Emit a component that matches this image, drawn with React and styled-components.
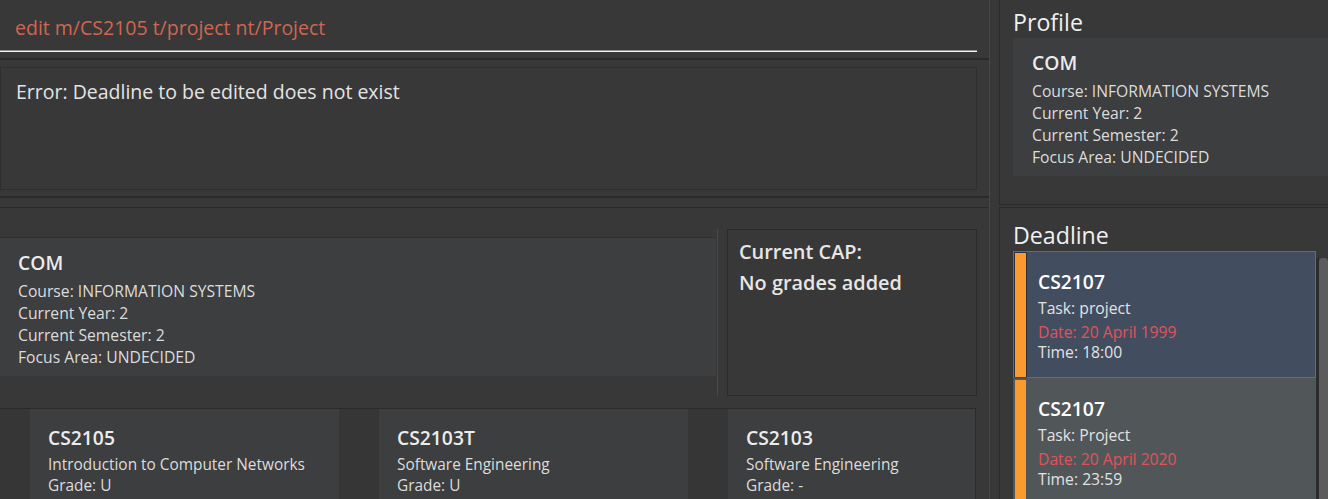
import React from "react";
import styled, { createGlobalStyle } from "styled-components";

const line = "#2b2b2b";

const GlobalStyle = createGlobalStyle`
  html, body {
    margin: 0;
    padding: 0;
    background: #383838;
  }
  body {
    font-family: "Open Sans", "Noto Sans", sans-serif;
    overflow: hidden;
  }
`;

const Window = styled.div`
  display: flex;
  width: 1328px;
  height: 499px;
  overflow: hidden;
  background: #383838;
`;

const LeftColumn = styled.div`
  width: 989px;
  flex-shrink: 0;
  display: flex;
  flex-direction: column;
`;

const ColumnSplit = styled.div`
  width: 1px;
  flex-shrink: 0;
  background: #474747;
`;

const CommandPane = styled.div`
  height: 58px;
  padding-right: 12px;
  box-sizing: border-box;
  flex-shrink: 0;
`;

const CommandField = styled.div`
  box-sizing: border-box;
  height: 52px;
  padding: 14px 0 0 15px;
  font-size: 19.5px;
  color: #d06651;
  white-space: nowrap;
  border-bottom: 1px solid #f4f4f4;
  box-shadow: inset 0 -1px 0 #8e8e8e;
`;

const PaneDivider = styled.div`
  height: 2px;
  flex-shrink: 0;
  background: ${line};
`;

const ResultPane = styled.div`
  height: 136px;
  flex-shrink: 0;
  box-sizing: border-box;
  padding: 7px 12px 6px 0;
`;

const ResultBox = styled.div`
  height: 100%;
  box-sizing: border-box;
  border: 1px solid #2e2e2e;
  padding: 10px 15px;
  font-size: 19.5px;
  color: #e4e4e4;
`;

const LowerPane = styled.div`
  flex: 1;
  display: flex;
  flex-direction: column;
  padding-top: 9px;
  min-height: 0;
`;

const InfoRow = styled.div`
  display: flex;
  height: 201px;
  flex-shrink: 0;
  box-sizing: border-box;
  border-top: 1px solid ${line};
  padding-right: 12px;
`;

const ProfileSlot = styled.div`
  width: 716px;
  flex-shrink: 0;
  padding-top: 29px;
`;

const ProfileCard = styled.div`
  background: #3c3e3f;
  border-top: ${(p) => (p.$edge ? "1px solid #303030" : "none")};
  padding: 12px 18px 8px;
  white-space: nowrap;
`;

const BigLabel = styled.div`
  font-size: 19.3px;
  font-weight: 600;
  line-height: 26px;
  color: ${(p) => p.$color || "#ececec"};
  margin-bottom: ${(p) => p.$gap || 0}px;
`;

const SmallLabel = styled.div`
  font-size: ${(p) => p.$size || 15.7}px;
  line-height: ${(p) => p.$lh || 22}px;
  color: ${(p) => p.$color || "#dcdcdc"};
  margin-top: ${(p) => p.$gap || 0}px;
`;

const VDivider = styled.div`
  width: 1px;
  flex-shrink: 0;
  margin: 21px 0 12px 1px;
  background: #4a4a4a;
`;

const CapBox = styled.div`
  flex: 1;
  margin: 21px 0 12px 9px;
  border: 1px solid ${line};
  padding: 6px 11px;
  font-size: 19.9px;
  font-weight: 600;
  line-height: 31px;
  color: #e6e6e6;
`;

const ModuleRow = styled.div`
  flex: 1;
  width: 976px;
  box-sizing: border-box;
  display: flex;
  gap: 40px;
  padding-left: 30px;
  border-top: 1px solid ${line};
  border-right: 1px solid ${line};
  overflow: hidden;
  background: #363636;
`;

const ModuleCard = styled.div`
  width: 309px;
  flex-shrink: 0;
  box-sizing: border-box;
  background: #3c3e3f;
  padding: 15.5px 18px 0;
  white-space: nowrap;
`;

const RightColumn = styled.div`
  flex: 1;
  min-width: 0;
  display: flex;
  flex-direction: column;
  padding-left: 9px;
  overflow: hidden;
`;

const ProfilePanel = styled.div`
  height: 205px;
  flex-shrink: 0;
  box-sizing: border-box;
  border-left: 1px solid ${line};
  border-bottom: 1px solid ${line};
  padding: 6px 0 0 13px;
  overflow: hidden;
`;

const PanelTitle = styled.div`
  font-size: 23.2px;
  line-height: 32px;
  color: #f0f0f0;
`;

const WideCard = styled(ProfileCard)`
  width: 400px;
  padding-left: 19px;
`;

const DeadlinePanel = styled.div`
  flex: 1;
  min-height: 0;
  margin-top: 2px;
  border-left: 1px solid ${line};
  border-top: 1px solid ${line};
  padding: 11px 0 0 13px;
  display: flex;
  flex-direction: column;
  overflow: hidden;
`;

const DeadlineList = styled.div`
  flex: 1;
  display: flex;
  min-height: 0;
`;

const DeadlineCards = styled.div`
  width: 303px;
  flex-shrink: 0;
  display: flex;
  flex-direction: column;
`;

const DeadlineCard = styled.div`
  display: flex;
  height: 127px;
  flex-shrink: 0;
  box-sizing: border-box;
  border: 1px solid ${(p) => (p.$selected ? "#3e7b91" : "transparent")};
  background: ${(p) => (p.$selected ? "#424d5f" : "#515658")};
`;

const Flag = styled.div`
  width: 11px;
  flex-shrink: 0;
  margin: 1px 0 0 1px;
  background: #fb9a2f;
  box-shadow: ${(p) => (p.$selected ? "0 0 0 1px rgba(0,0,0,0.35)" : "none")};
`;

const DeadlineBody = styled.div`
  padding: 16.5px 0 0 12px;
  white-space: nowrap;
`;

const ScrollTrack = styled.div`
  width: 12px;
  flex-shrink: 0;
  box-sizing: border-box;
  margin-top: 7px;
  border-left: 3px solid #2c2c2c;
  display: flex;
`;

const ScrollThumb = styled.div`
  flex: 1;
  background: #5c5c5c;
  border-radius: 4px 4px 0 0;
`;

const profile = [
  "Course: INFORMATION SYSTEMS",
  "Current Year: 2",
  "Current Semester: 2",
  "Focus Area: UNDECIDED",
];

const modules = [
  { code: "CS2105", title: "Introduction to Computer Networks", grade: "U" },
  { code: "CS2103T", title: "Software Engineering", grade: "U" },
  { code: "CS2103", title: "Software Engineering", grade: "-" },
];

const deadlines = [
  { code: "CS2107", task: "project", date: "20 April 1999", time: "18:00", selected: true },
  { code: "CS2107", task: "Project", date: "20 April 2020", time: "23:59" },
];

function Profile({ Card, edge }) {
  return (
    <Card $edge={edge}>
      <BigLabel $gap={4}>COM</BigLabel>
      {profile.map((text) => (
        <SmallLabel key={text}>{text}</SmallLabel>
      ))}
    </Card>
  );
}

function App() {
  return (
    <Window>
      <GlobalStyle />
      <LeftColumn>
        <CommandPane>
          <CommandField>edit m/CS2105 t/project nt/Project</CommandField>
        </CommandPane>
        <PaneDivider />
        <ResultPane>
          <ResultBox>Error: Deadline to be edited does not exist</ResultBox>
        </ResultPane>
        <PaneDivider />
        <LowerPane>
          <InfoRow>
            <ProfileSlot>
              <Profile Card={ProfileCard} edge />
            </ProfileSlot>
            <VDivider />
            <CapBox>
              <div>Current CAP:</div>
              <div>No grades added</div>
            </CapBox>
          </InfoRow>
          <ModuleRow>
            {modules.map((m) => (
              <ModuleCard key={m.code}>
                <BigLabel>{m.code}</BigLabel>
                <SmallLabel $size={15.4} $lh={21} $gap={3.5}>{m.title}</SmallLabel>
                <SmallLabel $size={15.4} $lh={21}>Grade: {m.grade}</SmallLabel>
              </ModuleCard>
            ))}
          </ModuleRow>
        </LowerPane>
      </LeftColumn>
      <ColumnSplit />
      <RightColumn>
        <ProfilePanel>
          <PanelTitle>Profile</PanelTitle>
          <Profile Card={WideCard} />
        </ProfilePanel>
        <DeadlinePanel>
          <PanelTitle>Deadline</PanelTitle>
          <DeadlineList>
            <DeadlineCards>
              {deadlines.map((d, i) => (
                <DeadlineCard key={i} $selected={d.selected}>
                  <Flag $selected={d.selected} />
                  <DeadlineBody>
                    <BigLabel $color="#ffffff" $gap={1}>{d.code}</BigLabel>
                    <SmallLabel $lh={25} $color="#e2e2e2">Task: {d.task}</SmallLabel>
                    <SmallLabel $color="#e0535c">Date: {d.date}</SmallLabel>
                    <SmallLabel $lh={18} $color="#e2e2e2">Time: {d.time}</SmallLabel>
                  </DeadlineBody>
                </DeadlineCard>
              ))}
            </DeadlineCards>
            <ScrollTrack>
              <ScrollThumb />
            </ScrollTrack>
          </DeadlineList>
        </DeadlinePanel>
      </RightColumn>
    </Window>
  );
}

export default App;
